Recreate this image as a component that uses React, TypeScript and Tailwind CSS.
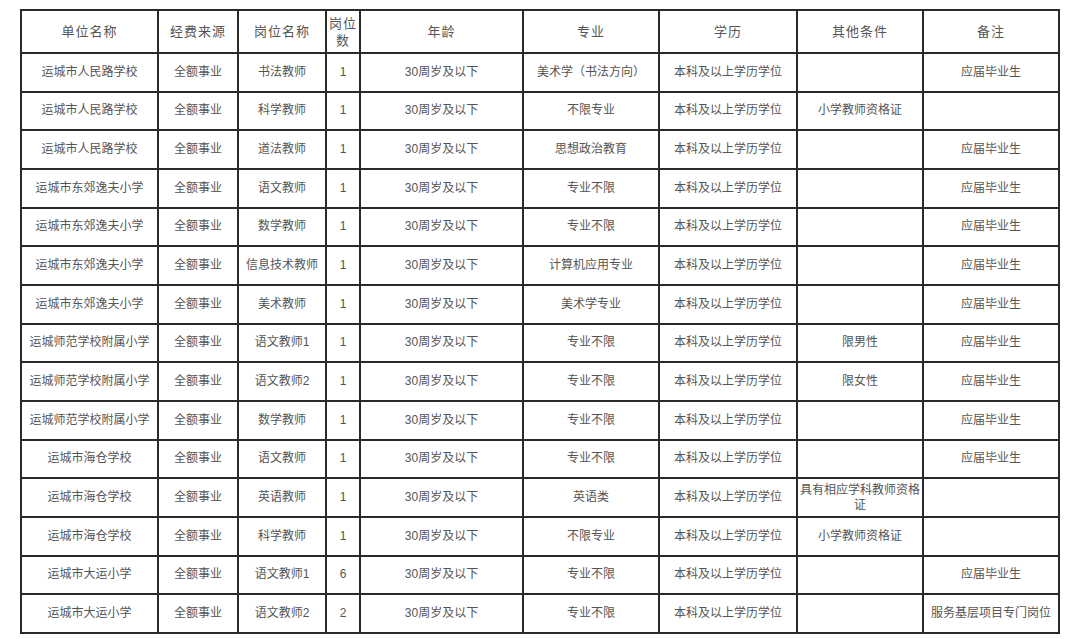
import React from "react";

const rows: string[][] = [
  ["运城市人民路学校", "全额事业", "书法教师", "1", "30周岁及以下", "美术学（书法方向）", "本科及以上学历学位", "", "应届毕业生"],
  ["运城市人民路学校", "全额事业", "科学教师", "1", "30周岁及以下", "不限专业", "本科及以上学历学位", "小学教师资格证", ""],
  ["运城市人民路学校", "全额事业", "道法教师", "1", "30周岁及以下", "思想政治教育", "本科及以上学历学位", "", "应届毕业生"],
  ["运城市东郊逸夫小学", "全额事业", "语文教师", "1", "30周岁及以下", "专业不限", "本科及以上学历学位", "", "应届毕业生"],
  ["运城市东郊逸夫小学", "全额事业", "数学教师", "1", "30周岁及以下", "专业不限", "本科及以上学历学位", "", "应届毕业生"],
  ["运城市东郊逸夫小学", "全额事业", "信息技术教师", "1", "30周岁及以下", "计算机应用专业", "本科及以上学历学位", "", "应届毕业生"],
  ["运城市东郊逸夫小学", "全额事业", "美术教师", "1", "30周岁及以下", "美术学专业", "本科及以上学历学位", "", "应届毕业生"],
  ["运城师范学校附属小学", "全额事业", "语文教师1", "1", "30周岁及以下", "专业不限", "本科及以上学历学位", "限男性", "应届毕业生"],
  ["运城师范学校附属小学", "全额事业", "语文教师2", "1", "30周岁及以下", "专业不限", "本科及以上学历学位", "限女性", "应届毕业生"],
  ["运城师范学校附属小学", "全额事业", "数学教师", "1", "30周岁及以下", "专业不限", "本科及以上学历学位", "", "应届毕业生"],
  ["运城市海仓学校", "全额事业", "语文教师", "1", "30周岁及以下", "专业不限", "本科及以上学历学位", "", "应届毕业生"],
  ["运城市海仓学校", "全额事业", "英语教师", "1", "30周岁及以下", "英语类", "本科及以上学历学位", "具有相应学科教师资格证", ""],
  ["运城市海仓学校", "全额事业", "科学教师", "1", "30周岁及以下", "不限专业", "本科及以上学历学位", "小学教师资格证", ""],
  ["运城市大运小学", "全额事业", "语文教师1", "6", "30周岁及以下", "专业不限", "本科及以上学历学位", "", "应届毕业生"],
  ["运城市大运小学", "全额事业", "语文教师2", "2", "30周岁及以下", "专业不限", "本科及以上学历学位", "", "服务基层项目专门岗位"],
];

const headers = ["单位名称", "经费来源", "岗位名称", "岗位数", "年龄", "专业", "学历", "其他条件", "备注"];
const widths = [137, 80, 88, 34, 163, 136, 138, 126, 136];

export default function App() {
  return (
    <div
      className="w-[1080px] h-[639px] bg-white pt-[9px] pl-[20px] overflow-hidden"
      style={{ fontFamily: '"Liberation Sans", "Noto Sans CJK SC", sans-serif' }}
    >
      <table className="table-fixed border-collapse w-[1038px] border-2 border-[#2a2a2a] text-[#555]">
        <colgroup>
          {widths.map((w, i) => (
            <col key={i} style={{ width: w }} />
          ))}
        </colgroup>
        <thead>
          <tr className="h-[43px]">
            {headers.map((h, i) => (
              <th
                key={i}
                className="border-x-2 border-y border-[#2a2a2a] font-normal text-[13px] leading-[17px] text-center align-middle tracking-[1px] px-0"
              >
                {i === 3 ? (
                  <span className="block leading-[17px]">岗位<br />数</span>
                ) : (
                  h
                )}
              </th>
            ))}
          </tr>
        </thead>
        <tbody>
          {rows.map((r, ri) => (
            <tr key={ri} className="h-[38.67px]">
              {r.map((c, ci) => (
                <td
                  key={ci}
                  className="border-x-2 border-y-2 border-[#2a2a2a] text-[12px] leading-[15px] text-center align-middle px-[2px]"
                >
                  {c}
                </td>
              ))}
            </tr>
          ))}
        </tbody>
      </table>
    </div>
  );
}
